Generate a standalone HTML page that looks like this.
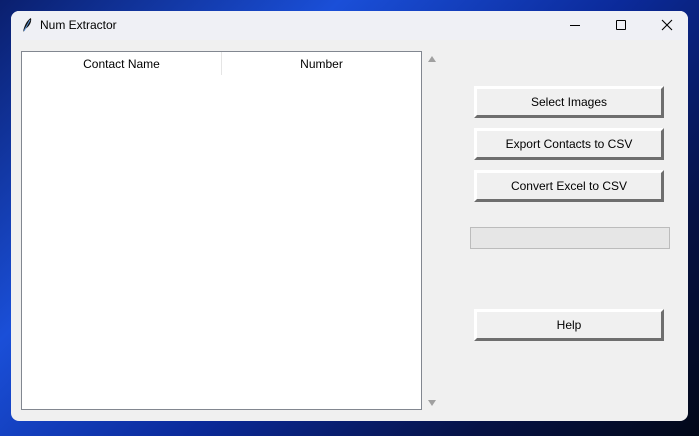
<!DOCTYPE html><html><head><style>
body{margin:0;width:699px;height:436px;overflow:hidden;position:relative;font-family:"Segoe UI","Liberation Sans",sans-serif;
background:linear-gradient(135deg,#0a1f6e 0%,#1a4fd8 30%,#0b2a9a 55%,#061245 80%,#020818 100%);}
.win{position:absolute;left:11px;top:11px;width:677px;height:410px;background:#f0f0f0;border-radius:8px;overflow:hidden}
.tb{position:absolute;left:0;top:0;width:100%;height:29px;background:#eff0f5}
.title{position:absolute;left:29px;top:7px;font-size:12px;color:#000}
.tv{position:absolute;left:10px;top:40px;width:399px;height:357px;background:#fff;border:1px solid #828790}
.hd{position:absolute;top:0;height:23px;line-height:25px;font-size:12px;text-align:center;color:#000}
.btn{position:absolute;left:463px;width:184px;height:26px;background:#f0f0f0;border-style:solid;border-width:3px;border-color:#fff #6e6e6e #6e6e6e #fff;text-align:center;line-height:26px;font-size:12px;color:#000}
.pb{position:absolute;left:459px;top:216px;width:198px;height:20px;background:#e6e6e6;border:1px solid #bcbcbc}
</style></head><body>
<div class="win">
<div class="tb">
<svg style="position:absolute;left:10px;top:6px" width="12" height="16" viewBox="0 0 12 16"><path d="M2 15 C3 9 6 3 10 1 C11 5 8 10 4 12 Z" fill="#111"/><path d="M3 14 L9 3" stroke="#5a8fd0" stroke-width="1"/></svg>
<div class="title">Num Extractor</div>
<div style="position:absolute;left:559px;top:14px;width:10px;height:1px;background:#000"></div>
<div style="position:absolute;left:605px;top:9px;width:8px;height:8px;border:1px solid #000;border-radius:1px"></div>
<svg style="position:absolute;left:650px;top:8px" width="12" height="12"><path d="M1 1L11 11M11 1L1 11" stroke="#000" stroke-width="1.1"/></svg>
</div>
<div class="tv">
<div class="hd" style="left:0;width:199px;border-right:1px solid #e5e5e5">Contact Name</div>
<div class="hd" style="left:200px;width:199px">Number</div>
</div>
<div style="position:absolute;left:417px;top:45px;width:0;height:0;border-left:4px solid transparent;border-right:4px solid transparent;border-bottom:6px solid #a0a0a0"></div>
<div style="position:absolute;left:417px;top:389px;width:0;height:0;border-left:4px solid transparent;border-right:4px solid transparent;border-top:6px solid #a0a0a0"></div>
<div class="btn" style="top:75px">Select Images</div>
<div class="btn" style="top:117px">Export Contacts to CSV</div>
<div class="btn" style="top:159px">Convert Excel to CSV</div>
<div class="pb"></div>
<div class="btn" style="top:298px">Help</div>
</div>
</body></html>
